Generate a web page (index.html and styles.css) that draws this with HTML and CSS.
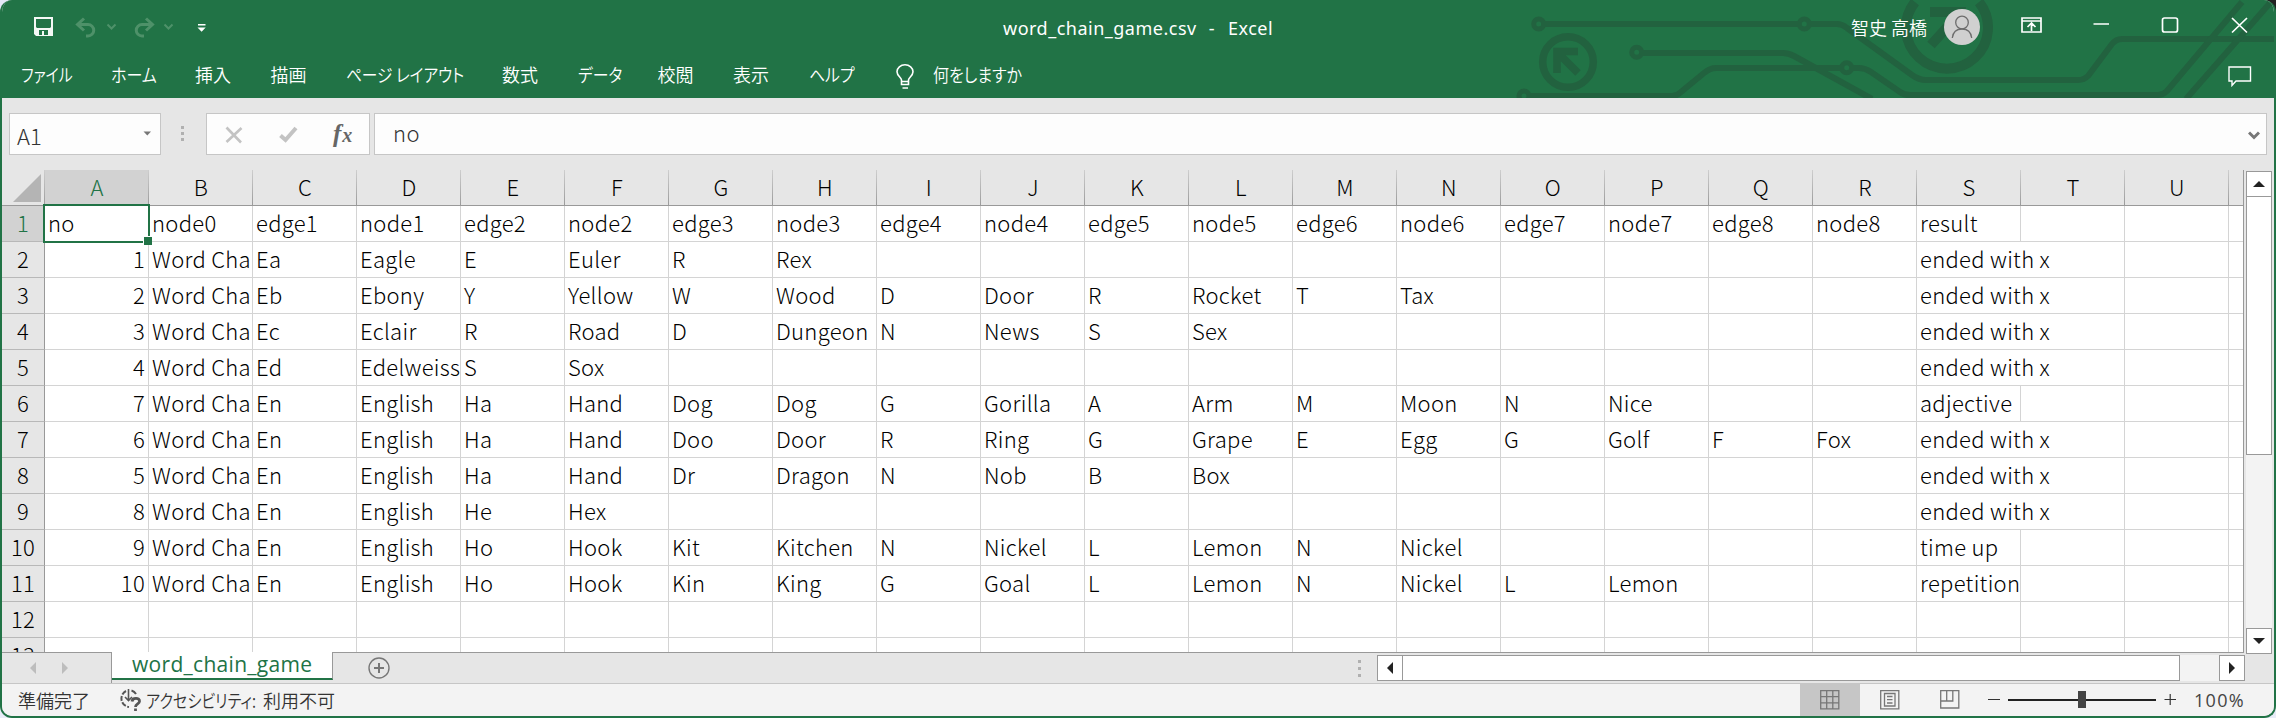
FILE: index.html
```html
<!DOCTYPE html>
<html lang="ja">
<head>
<meta charset="utf-8">
<title>word_chain_game.csv - Excel</title>
<link rel="stylesheet" href="styles.css">
</head>
<body>
<div class="window">
  <header class="top">
    <svg class="circuit" width="800" height="98" viewBox="1476 0 800 98" fill="none" stroke="#22623f" stroke-width="6">
      <g stroke-width="5">
        <circle cx="1538.7" cy="24" r="5"/><circle cx="1804.3" cy="24" r="5"/><circle cx="1636.7" cy="52.3" r="5"/>
        <circle cx="1524" cy="96" r="5"/><circle cx="1846.7" cy="67.7" r="5"/>
      </g>
      <path d="M1545 24H1798M1811 24H1837Q1842 24 1847 28L1912 75Q1919 80 1926 80H2078Q2084 80 2088 76L2112 44Q2116 39 2122 39H2274"/>
      <path d="M1643 53H1783Q1788 53 1794 56L1872 99"/>
      <path d="M1531 96H1672Q1677 96 1681 92L1704 73Q1710 68 1716 68H1840M1853 68H1859Q1865 68 1871 72L1900 92Q1904 95 1910 95H2158Q2163 95 2167 91L2242 2M2186 99L2270 3"/>
      <circle cx="1568" cy="62" r="25.3" stroke-width="7.5"/>
      <path d="M1578 51.5H1557V73M1558 53L1578 73" stroke-width="7.5"/>
      <path d="M1915 2A41 41 0 1 0 1979 2" stroke-width="10"/>
      <path d="M1930 12H1961V42M1959 14L1931 45" stroke-width="10"/>
    </svg>
    <div class="titlebar">
      <svg class="quick" width="240" height="52" viewBox="0 0 240 52" fill="none">
        <path fill="#f4f8f5" fill-rule="evenodd" d="M34 17H53V36H36L34 34ZM36 19V27L37 28H50L51 27V19ZM39 30V35H42V31H44V35H48V30Z"/>
        <g stroke="#4e9169" stroke-width="3">
          <path d="M84 18.500L77.500 24.500L84 30.500M78 24.500H88A5.700 5.700 0 0 1 88 36H86"/>
          <path d="M146 18.500L152.500 24.500L146 30.500M152 24.500H142A5.700 5.700 0 0 0 142 36H144"/>
          <path stroke-width="2" d="M107.500 24.500L111.500 28.500L115.500 24.500M164.500 24.500L168.500 28.500L172.500 24.500"/>
        </g>
        <path fill="#fff" d="M198 24H205.500V25.500H198ZM197.500 27.500H205.700L201.600 31.700Z"/>
      </svg>
      <div class="title"><span>word_chain_game.csv</span><span>-</span><span>Excel</span></div>
      <div class="user">智史 高橋</div>
      <svg class="controls" width="330" height="52" viewBox="1940 0 330 52" fill="none" stroke="#fff" stroke-width="1.7">
        <circle cx="1962" cy="27" r="18" fill="#d0d0d0" stroke="none"/>
        <g stroke="#6d6d6d" stroke-width="1.3"><circle cx="1962" cy="22.500" r="6.300"/><path d="M1952.300 38C1953 32 1957 29 1962 29S1971 32 1971.700 38"/></g>
        <path d="M2022 18H2041V32H2022ZM2022 21H2041M2031.500 31V23.500M2027.500 27L2031.500 23L2035.500 27"/>
        <path d="M2093.500 24H2109"/>
        <rect x="2162.500" y="18" width="15" height="14" rx="2"/>
        <path d="M2232 18L2247 32.500M2247 18L2232 32.500"/>
      </svg>
    </div>
    <nav class="ribbon">
      <span class="tab w-file"><b>ファイル</b></span>
      <span class="tab w-home"><b>ホーム</b></span>
      <span class="tab w-kanji">挿入</span>
      <span class="tab w-kanji">描画</span>
      <span class="tab w-page"><b>ページ レイアウト</b></span>
      <span class="tab w-kanji">数式</span>
      <span class="tab w-data"><b>データ</b></span>
      <span class="tab w-kanji">校閲</span>
      <span class="tab w-kanji">表示</span>
      <span class="tab w-help"><b>ヘルプ</b></span>
      <svg width="18" height="26" viewBox="0 0 18 26" fill="none" stroke="#fff" stroke-width="1.6"><path d="M5.500 18V16C5.500 13.500 1 12 1 7.800A8 7 0 0 1 17 7.800C17 12 12.500 13.500 12.500 16V20.500H5.500V17.500H12.500M6.500 24H12"/></svg>
      <span class="tab w-ask"><b>何をしますか</b></span>
      <svg class="comment" width="24" height="22" viewBox="0 0 24 22" fill="none" stroke="#fff" stroke-width="1.4"><path d="M1 1H22.500V15H8L4 19.500V15H1Z"/></svg>
    </nav>
  </header>

  <div class="formula">
    <div class="box name">A1<svg width="9" height="5" viewBox="0 0 9 5"><path fill="#777" d="M.5 .5H8L4.250 4.500Z"/></svg></div>
    <div class="dots"><i></i><i></i><i></i></div>
    <div class="box fx">
      <svg width="18" height="18" viewBox="0 0 18 18" fill="none" stroke="#c3c3c3" stroke-width="2.600"><path d="M1.500 1.500L16 16.500M16.500 2L1.500 16"/></svg>
      <svg width="19" height="18" viewBox="0 0 19 18" fill="none" stroke="#c3c3c3" stroke-width="4"><path d="M1.500 9.500L6.500 14L17 2"/></svg>
      <span class="fxmark">f<em>x</em></span>
    </div>
    <div class="box input">no<svg width="12" height="9" viewBox="0 0 12 9" fill="none" stroke="#777" stroke-width="3"><path d="M1 1.500L6 6.500L11 1.500"/></svg></div>
  </div>

  <main class="sheet">
    <div class="grid">
      <div class="selection"></div>
      <div class="heads">
        <span class="corner"><svg width="28" height="28" viewBox="0 0 28 28"><path fill="#b4b4b4" d="M28 0V28H0Z"/></svg></span>
        <span class="on">A</span><span>B</span><span>C</span><span>D</span><span>E</span><span>F</span><span>G</span><span>H</span><span>I</span><span>J</span><span>K</span><span>L</span><span>M</span><span>N</span><span>O</span><span>P</span><span>Q</span><span>R</span><span>S</span><span>T</span><span>U</span>
      </div>
      <div class="row"><i class="on">1</i><span>no</span><span>node0</span><span>edge1</span><span>node1</span><span>edge2</span><span>node2</span><span>edge3</span><span>node3</span><span>edge4</span><span>node4</span><span>edge5</span><span>node5</span><span>edge6</span><span>node6</span><span>edge7</span><span>node7</span><span>edge8</span><span>node8</span><span class="res">result</span></div>
      <div class="row"><i>2</i><span class="num">1</span><span>Word Cha</span><span>Ea</span><span>Eagle</span><span>E</span><span>Euler</span><span>R</span><span>Rex</span><span class="res over">ended with x</span></div>
      <div class="row"><i>3</i><span class="num">2</span><span>Word Cha</span><span>Eb</span><span>Ebony</span><span>Y</span><span>Yellow</span><span>W</span><span>Wood</span><span>D</span><span>Door</span><span>R</span><span>Rocket</span><span>T</span><span>Tax</span><span class="res over">ended with x</span></div>
      <div class="row"><i>4</i><span class="num">3</span><span>Word Cha</span><span>Ec</span><span>Eclair</span><span>R</span><span>Road</span><span>D</span><span>Dungeon</span><span>N</span><span>News</span><span>S</span><span>Sex</span><span class="res over">ended with x</span></div>
      <div class="row"><i>5</i><span class="num">4</span><span>Word Cha</span><span>Ed</span><span>Edelweiss</span><span>S</span><span>Sox</span><span class="res over">ended with x</span></div>
      <div class="row"><i>6</i><span class="num">7</span><span>Word Cha</span><span>En</span><span>English</span><span>Ha</span><span>Hand</span><span>Dog</span><span>Dog</span><span>G</span><span>Gorilla</span><span>A</span><span>Arm</span><span>M</span><span>Moon</span><span>N</span><span>Nice</span><span class="res">adjective</span></div>
      <div class="row"><i>7</i><span class="num">6</span><span>Word Cha</span><span>En</span><span>English</span><span>Ha</span><span>Hand</span><span>Doo</span><span>Door</span><span>R</span><span>Ring</span><span>G</span><span>Grape</span><span>E</span><span>Egg</span><span>G</span><span>Golf</span><span>F</span><span>Fox</span><span class="res over">ended with x</span></div>
      <div class="row"><i>8</i><span class="num">5</span><span>Word Cha</span><span>En</span><span>English</span><span>Ha</span><span>Hand</span><span>Dr</span><span>Dragon</span><span>N</span><span>Nob</span><span>B</span><span>Box</span><span class="res over">ended with x</span></div>
      <div class="row"><i>9</i><span class="num">8</span><span>Word Cha</span><span>En</span><span>English</span><span>He</span><span>Hex</span><span class="res over">ended with x</span></div>
      <div class="row"><i>10</i><span class="num">9</span><span>Word Cha</span><span>En</span><span>English</span><span>Ho</span><span>Hook</span><span>Kit</span><span>Kitchen</span><span>N</span><span>Nickel</span><span>L</span><span>Lemon</span><span>N</span><span>Nickel</span><span class="res">time up</span></div>
      <div class="row"><i>11</i><span class="num">10</span><span>Word Cha</span><span>En</span><span>English</span><span>Ho</span><span>Hook</span><span>Kin</span><span>King</span><span>G</span><span>Goal</span><span>L</span><span>Lemon</span><span>N</span><span>Nickel</span><span>L</span><span>Lemon</span><span class="res">repetition</span></div>
      <div class="row"><i>12</i></div>
      <div class="row"><i>13</i></div>
    </div>
    <div class="vscroll">
      <div class="btn"><svg width="12" height="6" viewBox="0 0 12 6"><path fill="#222" d="M6 0L12 6H0Z"/></svg></div>
      <div class="vthumb"></div>
      <div class="vtrack"></div>
      <div class="btn"><svg width="12" height="6" viewBox="0 0 12 6"><path fill="#222" d="M6 6L12 0H0Z"/></svg></div>
    </div>
  </main>

  <div class="tabs">
    <div class="nav"><svg width="38" height="12" viewBox="0 0 38 12"><path fill="#bdbdbd" d="M6 0V12L0 6ZM32 0V12L38 6Z"/></svg></div>
    <div class="sheettab">word_chain_game</div>
    <svg class="add" width="22" height="22" viewBox="0 0 22 22" fill="none" stroke="#777"><circle cx="11" cy="11" r="10" stroke-width="1.400"/><path stroke-width="2" d="M6 11H16M11 6V16"/></svg>
    <div class="dots small"><i></i><i></i><i></i></div>
    <div class="hscroll">
      <div class="btn"><svg width="6" height="12" viewBox="0 0 6 12"><path fill="#222" d="M0 6L6 0V12Z"/></svg></div>
      <div class="hthumb"></div>
      <div class="htrack"></div>
      <div class="btn"><svg width="6" height="12" viewBox="0 0 6 12"><path fill="#222" d="M6 6L0 0V12Z"/></svg></div>
    </div>
  </div>

  <footer class="status">
    <span class="ready">準備完了</span>
    <svg width="22" height="22" viewBox="0 0 22 22" fill="none" stroke="#555" stroke-width="2"><path d="M8.500 0V11M5 8L8.500 11.500L12 8" stroke-width="1.600"/><path d="M6 2A8.500 8.500 0 0 0 9 18" stroke-dasharray="5 1.500"/><path d="M11.500 1.500A8 8 0 0 1 16 5"/><path stroke-width="2.800" d="M12 12.500C12.500 8 20 8.500 19.500 12.500C19.300 15 15.500 15 15.500 18M15.500 19.500V22"/></svg>
    <span class="acc"><b>アクセシビリティ:</b></span><span>利用不可</span>
    <div class="views">
      <div class="view sel"><svg width="20" height="20" viewBox="0 0 20 20" fill="none" stroke="#777" stroke-width="1.300"><path d="M.7 .7H18.800V18.800H.7ZM6.700 .7V19M12.800 .7V19M.7 6.700H19M.7 12.800H19"/></svg></div>
      <div class="view"><svg width="20" height="20" viewBox="0 0 20 20" fill="none" stroke="#777" stroke-width="1.300"><path d="M.7 .7H18.800V18.800H.7ZM4.500 3.500H15V16H4.500ZM7 6.500H12.500M7 9.700H12.500M7 13H12.500"/></svg></div>
      <div class="view"><svg width="20" height="20" viewBox="0 0 20 20" fill="none" stroke="#777" stroke-width="1.300"><path d="M.7 .7H18.800V18H.7ZM6.700 .7V11M.7 11H12.800V.7"/></svg></div>
    </div>
    <svg class="zoom" width="190" height="20" viewBox="1987 690 190 20" fill="none" stroke="#333"><path stroke-width="1.200" d="M1988 699.500H2000M2164.500 699.500H2176M2170.200 694V705"/><path stroke-width="2" stroke="#222" d="M2008 700H2156"/><path stroke-width="8" stroke="#444" d="M2082 691V708"/></svg>
    <span class="pct">100%</span>
  </footer>
</div>
</body>
</html>
```
FILE: styles.css
```css
* { box-sizing: border-box; }
body {
  margin: 0;
  width: 2276px;
  height: 718px;
  overflow: hidden;
  background: linear-gradient(90deg, #e4e8f8 50%, #222 50%) top / 100% 50% no-repeat, #e9ecf8;
  font-family: "Noto Sans CJK JP", sans-serif;
}
svg { display: block; flex: none; }
.window {
  width: 2276px;
  height: 718px;
  border: 2px solid #217346;
  border-top: 0;
  border-radius: 12px;
  overflow: hidden;
  background: #e6e6e6;
  display: flex;
  flex-direction: column;
}

/* title bar and ribbon */
.top { position: relative; height: 98px; flex: none; background: #217346; color: #fff; }
.circuit { position: absolute; right: -2px; top: 0; }
.titlebar { position: relative; height: 52px; display: flex; }
.quick { margin-left: -2px; width: 240px; }
.title {
  margin-left: 763px;
  width: 848px;
  display: flex;
  font: 18px/57px "Noto Sans", sans-serif;
  letter-spacing: .5px;
}
.title span:nth-child(2) { margin: 0 13px 0 12px; }
.user { font-size: 18px; font-weight: 350; line-height: 55px; width: 89px; white-space: nowrap; }
.ribbon { position: relative; height: 46px; display: flex; align-items: center; padding-left: 19px; }
.ribbon > svg { margin-top: 4px; margin-right: 19px; }
.tab { font-size: 18px; font-weight: 350; line-height: 46px; margin-top: -2px; white-space: nowrap; font-feature-settings: "palt"; }
.tab b, .acc b { display: inline-block; font-weight: inherit; transform-origin: left; }
.w-file { width: 90px; } .w-file b { transform: scaleX(.83); }
.w-home { width: 84px; } .w-home b { transform: scaleX(.89); }
.w-kanji { width: 75.500px; }
.w-page { width: 156px; } .w-page b { transform: scaleX(.87); }
.w-data { width: 80px; } .w-data b { transform: scaleX(.88); }
.w-help { width: 87px; } .w-help b { transform: scaleX(.88); }
.w-ask b { transform: scaleX(.89); }
.ribbon .comment { margin: 3px 22px 0 auto; }

/* formula bar */
.formula { height: 72px; flex: none; display: flex; padding: 15px 7px 0; }
.box {
  height: 42px;
  border: 1px solid #c6c6c6;
  background: #fdfdfd;
  color: #333;
  font-size: 22px;
  font-weight: 300;
  line-height: 36px;
  display: flex;
}
.name { width: 152px; padding: 3px 8px 0 7px; justify-content: space-between; }
.name svg { margin-top: 14px; }
.dots { width: 3px; margin: 13px 22px 0 20px; display: flex; flex-direction: column; gap: 3px; }
.dots i { width: 3px; height: 3px; background: #b0b0b0; }
.fx { width: 164px; margin-right: 4px; padding: 12px 0 0 18px; }
.fx svg + svg { margin-left: 36px; }
.fxmark {
  font: italic bold 25px/16px "Liberation Serif", serif;
  margin-left: 35px;
  color: #666;
  letter-spacing: 1px;
}
.fxmark em { font-size: 20px; }
.input { flex: 1; padding: 0 6px 0 18px; justify-content: space-between; letter-spacing: .4px; }
.input svg { margin-top: 17px; }

/* worksheet */
.sheet { height: 483px; flex: none; display: flex; justify-content: space-between; }
.grid {
  position: relative;
  width: 2242px;
  height: 483px;
  overflow: hidden;
  border-right: 1px solid #999;
  border-bottom: 1px solid #999;
  background: #fff;
  font-size: 22px;
  font-weight: 300;
  letter-spacing: .3px;
  color: #000;
}
.heads, .row { display: grid; grid-template-columns: 43px repeat(21, 104px); }
.heads {
  width: 2242px;
  height: 36px;
  border-bottom: 1px solid #999;
  background: #e6e6e6;
  line-height: 32px;
  text-align: center;
}
.heads span {
  border-right: 1px solid;
  border-image: linear-gradient(#d0d0d0, #999) 1;
  height: 35px;
  padding-left: 1px;
}
.heads .on { background: #d2d2d2; color: #217346; }
.heads .corner { display: flex; padding: 4px 0 0 11px; }
.row {
  width: 2242px;
  height: 36px;
  line-height: 32px;
  background: linear-gradient(#d4d4d4, #d4d4d4) bottom / 100% 1px no-repeat,
    repeating-linear-gradient(90deg, transparent 0 103px, #d4d4d4 103px 104px) 43px 0;
}
.row i {
  font-style: normal;
  text-align: center;
  background: #e6e6e6;
  border-right: 1px solid #999;
  border-bottom: 1px solid #b8b8b8;
}
.row .on { background: #d2d2d2; color: #217346; }
.row span { padding-left: 3px; height: 35px; width: 103px; overflow: hidden; white-space: nowrap; }
.row .num { text-align: right; padding-right: 3px; }
.row .res { grid-column: 20; }
.row .over { width: 206px; background: linear-gradient(#d4d4d4, #d4d4d4) right / 0 0 no-repeat, #fff; }
.selection {
  position: absolute;
  left: 41px;
  top: 34px;
  width: 107px;
  height: 39px;
  border: 2px solid #217346;
  z-index: 1;
}
.selection::after {
  content: "";
  position: absolute;
  right: -4px;
  bottom: -4px;
  width: 8px;
  height: 8px;
  background: #217346;
  border: solid #fff;
  border-width: 1px 0 0 1px;
}
.btn {
  width: 26px;
  height: 26px;
  flex: none;
  border: 1px solid #999;
  background: #fff;
  display: flex;
  align-items: center;
  justify-content: center;
}
.vscroll { width: 26px; margin: 1px 2px -1px 0; display: flex; flex-direction: column; }
.vthumb { height: 259px; margin-top: -1px; background: #fff; border: 1px solid #999; }
.vtrack { flex: 1; background: #f3f3f3; }

/* sheet tabs */
.tabs { height: 31px; flex: none; display: flex; border-bottom: 1px solid #c6c6c6; }
.nav { width: 110px; padding: 9px 0 0 28px; border-right: 1px solid #999; }
.sheettab {
  width: 221px;
  height: 28px;
  margin-top: -1px;
  border-right: 1px solid #999;
  border-bottom: 2px solid #217346;
  padding-left: 20px;
  background: #fff;
  color: #217346;
  font: 21px/25px "Open Sans", sans-serif;
  letter-spacing: .3px;
  position: relative;
}
.nav, .sheettab { flex: none; }
.add { margin: 4px 0 0 35px; }
.small { margin: 7px 16px 0 auto; gap: 4px; }
.hscroll { display: flex; padding-top: 2px; margin-right: 29px; }
.hthumb { width: 778px; height: 26px; margin-left: -1px; background: #fff; border: 1px solid #999; }
.htrack { width: 39px; height: 26px; background: #f3f3f3; }

/* status bar */
.status {
  height: 32px;
  flex: none;
  display: flex;
  align-items: center;
  padding-left: 16px;
  background: #f3f3f3;
  color: #333;
  font-size: 18px;
  font-weight: 350;
  line-height: 30px;
  white-space: nowrap;
}
.ready { width: 102px; }
.acc { width: 117px; margin-left: 4px; font-feature-settings: "palt"; }
.acc b { transform: scaleX(.84); }
.views { display: flex; margin-left: auto; align-self: stretch; }
.view { width: 60px; display: flex; justify-content: center; padding-top: 6px; }
.view.sel { background: #c6c6c6; }
.zoom { margin-left: 7px; }
.pct { width: 80px; margin-left: 17px; font-family: "Open Sans", sans-serif; font-weight: 400; letter-spacing: 1.300px; color: #444; }
```
